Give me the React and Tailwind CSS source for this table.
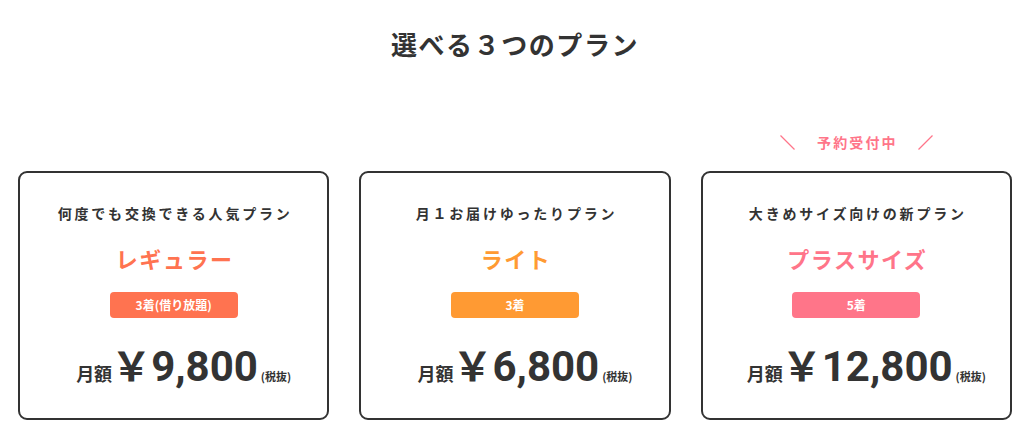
import React from "react";

const plans = [
  {
    lead: "何度でも交換できる人気プラン",
    name: "レギュラー",
    count: "3着(借り放題)",
    price: "9,800",
    color: "text-[#ff7350]",
    bg: "bg-[#ff7350]",
  },
  {
    lead: "月１お届けゆったりプラン",
    name: "ライト",
    count: "3着",
    price: "6,800",
    color: "text-[#ff9a33]",
    bg: "bg-[#ff9a33]",
  },
  {
    lead: "大きめサイズ向けの新プラン",
    name: "プラスサイズ",
    count: "5着",
    price: "12,800",
    color: "text-[#ff7589]",
    bg: "bg-[#ff7589]",
  },
];

const Slash = ({ flip }) => (
  <svg width="15" height="15" viewBox="0 0 15 15" className="shrink-0">
    {flip ? (
      <line x1="14.5" y1="0.5" x2="0.5" y2="14.5" stroke="#ff7589" strokeWidth="1.2" />
    ) : (
      <line x1="0.5" y1="0.5" x2="14.5" y2="14.5" stroke="#ff7589" strokeWidth="1.2" />
    )}
  </svg>
);

const PlanCard = ({ plan }) => (
  <div className="h-[249px] rounded-[9px] border-2 border-[#333] bg-white flex flex-col items-center">
    <p className="mt-[30px] text-[14px] leading-[20px] font-bold tracking-[0.2em] text-[#333] pl-[3px]">{plan.lead}</p>
    <h2 className={`mt-[20px] text-[22px] leading-[30px] font-bold tracking-[0.07em] pl-[2px] ${plan.color}`}>{plan.name}</h2>
    <div className={`mt-[19px] w-[128px] h-[26px] rounded-[4px] flex items-center justify-center text-white text-[12px] font-bold ${plan.bg}`}>
      {plan.count}
    </div>
    <div className="mt-[25px] pl-[20px] flex items-baseline text-[#333]">
      <span className="text-[18px] font-bold">月額</span>
      <span className="ml-[-1px] text-[40px] leading-[42px] font-bold">￥</span>
      <span className="text-[42px] leading-[42px] font-bold font-['Roboto','Noto_Sans_CJK_JP',sans-serif]">{plan.price}</span>
      <span className="ml-[3px] text-[11px] font-bold">(税抜)</span>
    </div>
  </div>
);

export default function App() {
  return (
    <main className="w-[1030px] h-[437px] bg-white px-[18px] pt-[30px] font-['Noto_Sans_CJK_JP','Noto_Sans',sans-serif] text-[#333]">
      <h1 className="text-center text-[26px] leading-[28px] font-bold tracking-[0.06em]">選べる３つのプラン</h1>
      <div className="mt-[74px] grid grid-cols-3 gap-[30px] h-[20px]">
        <div />
        <div />
        <div className="flex items-center justify-center gap-[20px]">
          <Slash />
          <span className="text-[14px] font-bold tracking-[0.15em] text-[#ff7589] pl-[2px]">予約受付中</span>
          <Slash flip />
        </div>
      </div>
      <div className="mt-[19px] grid grid-cols-3 gap-[30px]">
        {plans.map((p) => (
          <PlanCard key={p.name} plan={p} />
        ))}
      </div>
    </main>
  );
}
